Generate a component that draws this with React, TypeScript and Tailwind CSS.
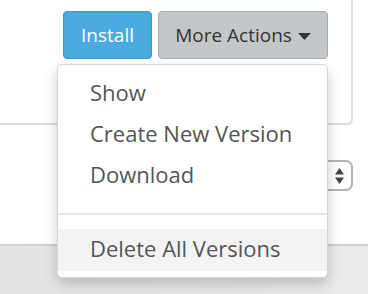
import React from 'react';

const menuItems = ['Show', 'Create New Version', 'Download'];

const App: React.FC = () => {
  return (
    <div
      className="relative h-[294px] w-[368px] overflow-hidden bg-white"
      style={{ fontFamily: '"Open Sans", "Noto Sans", sans-serif' }}
    >
      {/* top panel */}
      <div className="mr-[15px] h-[125px] rounded-br-[6px] border-r-2 border-b-2 border-[#dcdcdc] bg-white">
        <div className="flex gap-[6px] pl-[63px] pt-[11px]">
          <button className="h-[48px] w-[89px] rounded-[4px] border border-[#3e98cc] bg-[#4aa9de] text-[19px] text-white">
            Install
          </button>
          <button className="flex h-[48px] w-[170px] items-center justify-center gap-[6px] rounded-[4px] border border-[#a9acae] bg-[#c4c7c9] text-[19px] text-[#333]">
            More Actions
            <svg width="13" height="7" viewBox="0 0 13 7" className="mt-[2px]">
              <path d="M0 0h13L6.5 7z" fill="#333" />
            </svg>
          </button>
        </div>
      </div>

      {/* middle row with select */}
      <div className="flex h-[119px] justify-end pr-[15px] pt-[35px]">
        <div className="flex h-[31px] w-[90px] items-center justify-end rounded-r-[7px] border-2 border-[#b3b3b3] bg-white pr-[6px]">
          <svg width="11" height="18" viewBox="0 0 11 18">
            <path d="M5.5 1L10 7.5H1z" fill="#444" />
            <path d="M5.5 17L10 10.5H1z" fill="#444" />
          </svg>
        </div>
      </div>

      {/* footer */}
      <div className="h-[50px] border-t-2 border-[#d0d0d0] bg-gradient-to-r from-[#e4e4e4] to-[#ebebeb]" />

      {/* dropdown menu */}
      <div className="absolute left-[57px] top-[64px] w-[271px] rounded-[5px] border border-[#d5d5d5] bg-white pt-[7px] pb-[6px] shadow-[0_6px_14px_rgba(0,0,0,0.2)]">
        {menuItems.map((item) => (
          <div key={item} className="flex h-[41px] items-center pl-[32px] text-[22px] text-[#555]">
            {item}
          </div>
        ))}
        <div className="mt-[18px] mb-[14px] h-[2px] bg-[#e5e5e5]" />
        <div className="flex h-[42px] items-center bg-[#f3f3f3] pb-[3px] pl-[32px] text-[22px] text-[#555]">
          Delete All Versions
        </div>
      </div>
    </div>
  );
};

export default App;
